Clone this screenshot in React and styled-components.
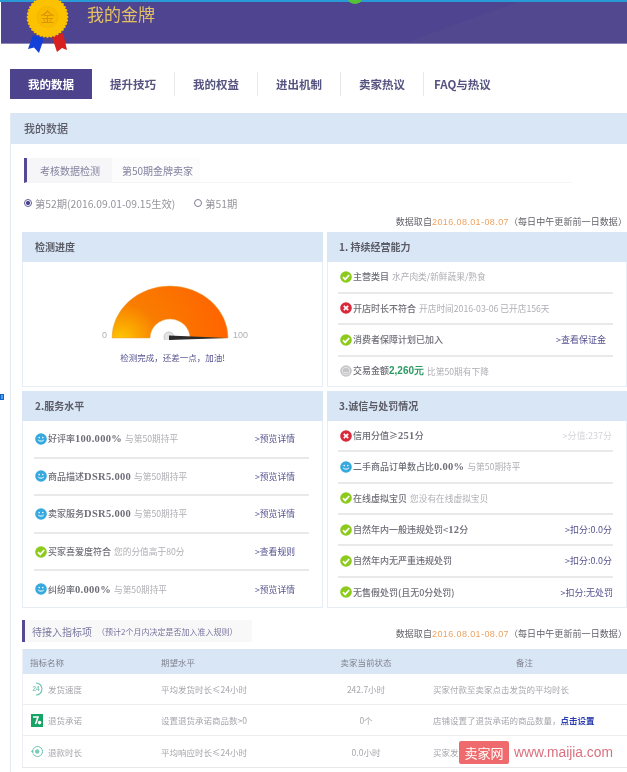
import styled, { createGlobalStyle } from "styled-components";

const GlobalStyle = createGlobalStyle`
  html, body {
    margin: 0;
    background: #fff;
    overflow: hidden;
  }
  body {
    font-family: "Noto Sans CJK SC", "Liberation Sans", sans-serif;
    font-size: 9px;
    color: #77767f;
  }
`;

const Page = styled.div`
  position: relative;
  width: 627px;
  height: 772px;
  overflow: hidden;
  filter: blur(0.45px);
`;

const TopLine = styled.div`
  height: 2px;
  background: #2a9ad6;
`;

const Banner = styled.header`
  height: 42px;
  margin-left: 1px;
  padding-left: 86px;
  display: flex;
  align-items: flex-start;
  background: linear-gradient(160deg, #4f4490 0 70%, #52488f 70% 100%);
  border-bottom: 1px solid #8d86bb;
  box-sizing: border-box;
`;

const BannerTitle = styled.h1`
  margin: 0;
  font-size: 17px;
  line-height: 24px;
  font-weight: 400;
  color: #e3c064;
`;

const Medal = styled.svg`
  position: absolute;
  left: 24px;
  top: 0;
`;

const GreenDot = styled.div`
  position: absolute;
  left: 348px;
  top: -6px;
  width: 14px;
  height: 10px;
  border-radius: 50%;
  background: #55c23a;
`;

const SideMark = styled.div`
  position: absolute;
  left: 0;
  top: 394px;
  width: 2px;
  height: 4px;
  border: 1px solid #1565c8;
  background: #4aa0f0;
`;

const Tabs = styled.nav`
  display: flex;
  margin: 25px 0 14px 10px;
  height: 30px;
`;

const Tab = styled.div`
  width: ${(p) => (p.$active ? "82px" : "83px")};
  display: flex;
  align-items: center;
  justify-content: center;
  box-sizing: border-box;
  font-size: 11.5px;
  font-weight: 700;
  background: ${(p) => (p.$active ? "#4c438c" : "transparent")};
  color: ${(p) => (p.$active ? "#fff" : "#55537f")};
  border-right: ${(p) => (p.$sep ? "1px solid #e8e8ec" : "0")};
  margin: ${(p) => (p.$active ? "0" : "3px 0")};
`;

const LastTab = styled(Tab)`
  justify-content: flex-start;
  padding-left: 10px;
  width: 90px;
`;

const Section = styled.section`
  margin-left: 10px;
  border-left: 1px solid #e3e9f0;
  height: 700px;
`;

const SectionHead = styled.h2`
  margin: 0;
  height: 31px;
  padding: 0 0 2px 13px;
  box-sizing: border-box;
  display: flex;
  align-items: center;
  background: #d8e6f6;
  font-size: 11px;
  font-weight: 500;
  color: #5a5a66;
`;

const SectionBody = styled.div`
  padding: 14px 0 0 11px;
`;

const SubTabs = styled.div`
  display: flex;
  width: 545px;
  margin-left: 2px;
  height: 24px;
  border-left: 3px solid #544a94;
  border-bottom: 1px solid #f5f5f7;
`;

const SubTab = styled.div`
  display: flex;
  align-items: center;
  padding: 0 ${(p) => (p.$active ? "12px" : "7px")} 0 ${(p) => (p.$active ? "13px" : "10px")};
  font-size: 10px;
  color: #85829f;
  background: ${(p) => (p.$active ? "#f6f6f8" : "#fcfcfd")};
`;

const Periods = styled.div`
  display: flex;
  align-items: center;
  margin: 12px 0 0 2px;
  height: 16px;
  font-size: 10.3px;
  color: #96959e;
`;

const Radio = styled.span`
  width: 8px;
  height: 8px;
  border-radius: 50%;
  margin-right: 3px;
  border: 1px solid ${(p) => (p.$on ? "#5d5a96" : "#7a7a98")};
  box-sizing: border-box;
  background: ${(p) => (p.$on ? "radial-gradient(circle, #4c438c 0 2px, #fff 2.2px)" : "#fff")};
`;

const PeriodGap = styled.span`
  width: 19px;
`;

const DataLine = styled.div`
  display: flex;
  justify-content: flex-end;
  height: 12px;
  line-height: 12px;
  margin-top: 5px;
  font-size: 9px;
  letter-spacing: 0.08px;
  color: #5f5f68;
  white-space: nowrap;
`;

const DateRange = styled.span`
  color: #eda25f;
  font-family: "Liberation Sans", sans-serif;
  letter-spacing: 0.4px;
`;

const PanelGrid = styled.div`
  display: grid;
  grid-template-columns: 301px 300px;
  grid-template-rows: 155px 217px;
  gap: 4px;
  margin-top: 4px;
`;

const Panel = styled.div`
  display: flex;
  flex-direction: column;
  border: 1px solid #e6edf4;
  border-top: 0;
`;

const PanelHead = styled.h3`
  margin: 0 -1px;
  height: 30px;
  flex: none;
  padding: 0 0 2px ${(p) => p.$pad || 13}px;
  box-sizing: border-box;
  display: flex;
  align-items: center;
  background: #d8e6f6;
  font-size: 10px;
  font-weight: 700;
  color: #5c5c66;
`;

const Rows = styled.div`
  flex: 1;
  display: flex;
  flex-direction: column;
  margin: 0 ${(p) => p.$right}px 0 ${(p) => p.$left}px;
`;

const Row = styled.div`
  flex: 1;
  display: flex;
  align-items: center;
  min-height: 0;
  border-bottom: 2px solid #e9e9ec;
  white-space: nowrap;
  &:last-child {
    border-bottom: 0;
  }
`;

const RowIcon = styled.svg`
  flex: none;
  margin: 0 1px 0 ${(p) => p.$inset}px;
`;

const Main = styled.span`
  color: #6e6e78;
  font-size: 9px;
  font-weight: 500;
`;

const Strong = styled.b`
  font-family: "Liberation Serif", serif;
  font-size: 10.5px;
  letter-spacing: 0.3px;
`;

const Amount = styled.b`
  font-family: "Liberation Sans", sans-serif;
  font-size: 10px;
  color: #2b9a62;
`;

const Note = styled.span`
  margin-left: 3px;
  color: #aeaeb4;
  font-size: 8.7px;
`;

const Action = styled.span`
  margin-left: auto;
  margin-right: ${(p) => p.$mr}px;
  font-size: ${(p) => (p.$small ? "8.8px" : "9px")};
  color: ${(p) => (p.$muted ? "#d4d4d8" : "#55528f")};
`;

const GaugeBody = styled.div`
  flex: 1;
  display: flex;
  flex-direction: column;
  align-items: center;
  padding-top: 23px;
`;

const GaugeRow = styled.div`
  display: flex;
  align-items: flex-end;
  height: 55px;
  margin-left: -5px;
  font-family: "Liberation Sans", sans-serif;
  font-size: 9px;
  color: #b0b0b4;
  line-height: 10px;
`;

const GaugeLabel = styled.span`
  width: 20px;
  text-align: ${(p) => p.$align};
  padding: 0 ${(p) => (p.$align === "right" ? "4px" : "0")} 0 ${(p) => (p.$align === "left" ? "4px" : "0")};
  box-sizing: border-box;
`;

const GaugeText = styled.div`
  margin-top: 11px;
  font-size: 8.5px;
  color: #55528f;
`;

const PendingBar = styled.div`
  display: flex;
  align-items: center;
  margin-top: 12px;
  height: 22px;
`;

const PendingTitle = styled.div`
  display: flex;
  align-items: center;
  height: 22px;
  width: 230px;
  padding-left: 7px;
  border-left: 3px solid #544a94;
  box-sizing: border-box;
  background: #f8f8f9;
  font-size: 10px;
  color: #7a78a0;
`;

const PendingHint = styled.span`
  margin-left: 5px;
  font-size: 8px;
  color: #77749c;
`;

const PendingData = styled(DataLine)`
  margin: 6px 0 0 auto;
`;

const Table = styled.div`
  margin-top: 7px;
  width: 605px;
  border-bottom: 1px solid #e8e8ec;
`;

const TableRow = styled.div`
  display: grid;
  grid-template-columns: 138px 150px 110px 207px;
  align-items: center;
  height: ${(p) => (p.$head ? "25px" : "31px")};
  background: ${(p) => (p.$head ? "#d8e6f6" : "#fff")};
  border-left: 1px solid #ecf0f5;
  border-bottom: ${(p) => (p.$head ? "0" : "1px solid #eeeef1")};
  box-sizing: border-box;
  color: ${(p) => (p.$head ? "#83838f" : "#a6a6ac")};
  font-size: 8.5px;
  white-space: nowrap;
  &:last-child {
    border-bottom: 0;
  }
`;

const NameCell = styled.div`
  display: flex;
  align-items: center;
  padding-left: ${(p) => (p.$head ? 7 : 8)}px;
`;

const MetricIcon = styled.svg`
  flex: none;
  margin-right: 5px;
`;

const Cell = styled.div`
  text-align: ${(p) => (p.$center ? "center" : "left")};
  padding-left: ${(p) => (p.$pad ? "12px" : "0")};
`;

const SetLink = styled.b`
  color: #2a3db0;
`;

const Watermark = styled.div`
  position: absolute;
  left: 459px;
  top: 741px;
  display: flex;
  align-items: center;
`;

const WatermarkBadge = styled.div`
  width: 50px;
  height: 23px;
  display: flex;
  align-items: center;
  justify-content: center;
  border-radius: 2px;
  background: #ee6a6c;
  color: #fff;
  font-size: 13px;
`;

const WatermarkUrl = styled.span`
  margin-left: 5px;
  font-family: "Liberation Sans", sans-serif;
  font-size: 13.8px;
  color: #d9707f;
`;

function StatusIcon({ type, inset = 0 }) {
  const fill = { ok: "#8ccb1c", bad: "#d8283a", smile: "#36a9de", neutral: "#c6c6c8" }[type];
  return (
    <RowIcon $inset={inset} width="12" height="12" viewBox="0 0 12 12">
      <circle cx="6" cy="6" r="5.8" fill={fill} />
      {type === "ok" && (
        <path d="M3 6.2l2.2 2.2L9.2 4" fill="none" stroke="#fff" strokeWidth="1.7" />
      )}
      {type === "bad" && (
        <path d="M3.8 3.8l4.4 4.4M8.2 3.8L3.8 8.2" fill="none" stroke="#fff" strokeWidth="1.7" />
      )}
      {type === "smile" && (
        <>
          <circle cx="4.2" cy="4.6" r="0.8" fill="#fff" />
          <circle cx="7.8" cy="4.6" r="0.8" fill="#fff" />
          <path d="M3.2 7c.8 1.5 4.8 1.5 5.6 0" fill="none" stroke="#fff" strokeWidth="1" />
        </>
      )}
      {type === "neutral" && (
        <>
          <circle cx="6" cy="6" r="3.8" fill="none" stroke="#ededee" strokeWidth="0.8" />
          <path d="M4 7.5h4" stroke="#ededee" strokeWidth="0.8" />
        </>
      )}
    </RowIcon>
  );
}

function MedalArt() {
  const scallops = Array.from({ length: 36 }, (_, i) => {
    const a = (i / 36) * Math.PI * 2;
    return <circle key={i} cx={23.5 + Math.cos(a) * 19.6} cy={17 + Math.sin(a) * 19.6} r="1.3" fill="#fcc200" />;
  });
  return (
    <Medal width="46" height="56" viewBox="0 0 46 56">
      <polygon points="9,35 4,49 10,47.5 15,53 20,38" fill="#1240d8" />
      <polygon points="28,37 33,52 38,48 43,50 39,33" fill="#d81f1f" />
      {scallops}
      <circle cx="23.5" cy="17" r="19.8" fill="#fcc200" />
      <circle cx="23.5" cy="17" r="10.5" fill="#f9bb00" stroke="#f0ae00" strokeWidth="0.6" />
      <text x="23.5" y="22" textAnchor="middle" fontSize="14" fill="#dd9300" fontFamily="Noto Sans CJK SC">
        金
      </text>
    </Medal>
  );
}

function Gauge() {
  return (
    <svg width="118" height="55" viewBox="0 0 118 55">
      <defs>
        <radialGradient id="gaugeFill" gradientUnits="userSpaceOnUse" cx="10" cy="56" r="105">
          <stop offset="0" stopColor="#ffcc00" />
          <stop offset="0.16" stopColor="#fba600" />
          <stop offset="0.36" stopColor="#f97d00" />
          <stop offset="1" stopColor="#ff6400" />
        </radialGradient>
      </defs>
      <path d="M1 53A58 52 0 0 1 117 53H79A20 19 0 0 0 39 53Z" fill="url(#gaugeFill)" stroke="#e8a040" strokeWidth="0.5" />
      <circle cx="58" cy="52" r="5" fill="#e4e4e4" stroke="#c8c8c8" />
      <path d="M58 50.6L117 53L58 55Z" fill="#2b2b2b" />
    </svg>
  );
}

function PendingIcon({ kind }) {
  if (kind === "seven") {
    return (
      <MetricIcon width="12" height="13" viewBox="0 0 12 13">
        <rect width="12" height="13" fill="#17a567" />
        <path d="M2 3h5L4.5 10" fill="none" stroke="#fff" strokeWidth="1.6" />
        <circle cx="8.6" cy="8.6" r="1.8" fill="#fff" />
      </MetricIcon>
    );
  }
  if (kind === "refund") {
    return (
      <MetricIcon width="12" height="13" viewBox="0 0 12 13">
        <path d="M2 4.4A5 5 0 1 1 2 8.6" fill="none" stroke="#69c5ae" strokeWidth="1" />
        <path d="M0 6.5l2.4-2.4v4.4z" fill="#69c5ae" />
        <circle cx="6.2" cy="6.5" r="2.2" fill="#7ccab8" />
      </MetricIcon>
    );
  }
  return (
    <MetricIcon width="12" height="14" viewBox="0 0 12 14">
      <path d="M5 1a6 6 0 0 1 0 12" fill="none" stroke="#69c5ae" strokeWidth="1.1" />
      <text x="5" y="9.4" textAnchor="middle" fontSize="6.5" fontWeight="700" fill="#8ac8bc" fontFamily="Liberation Sans">
        24
      </text>
    </MetricIcon>
  );
}

const ability = [
  { icon: "ok", main: "主营类目", note: "水产肉类/新鲜蔬果/熟食" },
  { icon: "bad", main: "开店时长不符合", note: "开店时间2016-03-06 已开店156天" },
  { icon: "ok", main: "消费者保障计划已加入", action: ">查看保证金", mr: 7 },
  { icon: "neutral", main: "交易金额", amount: "2,260元", note: "比第50期有下降" },
];

const service = [
  { icon: "smile", main: "好评率", strong: "100.000%", note: "与第50期持平", action: ">预览详情" },
  { icon: "smile", main: "商品描述", strong: "DSR5.000", note: "与第50期持平", action: ">预览详情" },
  { icon: "smile", main: "卖家服务", strong: "DSR5.000", note: "与第50期持平", action: ">预览详情" },
  { icon: "ok", main: "买家喜爱度符合", note: "您的分值高于80分", action: ">查看规则" },
  { icon: "smile", main: "纠纷率", strong: "0.000%", note: "与第50期持平", action: ">预览详情" },
];

const integrity = [
  { icon: "bad", main: "信用分值≥", strong: "251", tail: "分", action: ">分值:237分", muted: true },
  { icon: "smile", main: "二手商品订单数占比", strong: "0.00%", note: "与第50期持平" },
  { icon: "ok", main: "在线虚拟宝贝", note: "您没有在线虚拟宝贝" },
  { icon: "ok", main: "自然年内一般违规处罚<", strong: "12", tail: "分", action: ">扣分:0.0分" },
  { icon: "ok", main: "自然年内无严重违规处罚", action: ">扣分:0.0分" },
  { icon: "ok", main: "无售假处罚(且无0分处罚)", action: ">扣分:无处罚", mr: 0 },
];

const pending = [
  { kind: "clock", name: "发货速度", goal: "平均发货时长≤24小时", state: "242.7小时", note: "买家付款至卖家点击发货的平均时长" },
  { kind: "seven", name: "退货承诺", goal: "设置退货承诺商品数>0", state: "0个", note: "店铺设置了退货承诺的商品数量，", link: "点击设置" },
  { kind: "refund", name: "退款时长", goal: "平均响应时长≤24小时", state: "0.0小时", note: "买家发" },
];

function MetricRows({ items, left, right, actionMr, inset, small }) {
  return (
    <Rows $left={left} $right={right}>
      {items.map((item) => (
        <Row key={item.main}>
          <StatusIcon type={item.icon} inset={inset} />
          <Main>
            {item.main}
            {item.strong && <Strong>{item.strong}</Strong>}
            {item.tail}
            {item.amount && <Amount>{item.amount}</Amount>}
          </Main>
          {item.note && <Note>{item.note}</Note>}
          {item.action && (
            <Action $small={small} $mr={item.mr ?? actionMr} $muted={item.muted}>
              {item.action}
            </Action>
          )}
        </Row>
      ))}
    </Rows>
  );
}

function DataSource() {
  return (
    <>
      数据取自<DateRange>2016.08.01-08.07</DateRange>（每日中午更新前一日数据）
    </>
  );
}

export default function App() {
  return (
    <Page>
      <GlobalStyle />
      <TopLine />
      <Banner>
        <BannerTitle>我的金牌</BannerTitle>
      </Banner>
      <MedalArt />
      <GreenDot />
      <SideMark />

      <Tabs>
        <Tab $active>我的数据</Tab>
        <Tab $sep>提升技巧</Tab>
        <Tab $sep>我的权益</Tab>
        <Tab $sep>进出机制</Tab>
        <Tab $sep>卖家热议</Tab>
        <LastTab>FAQ与热议</LastTab>
      </Tabs>

      <Section>
        <SectionHead>我的数据</SectionHead>
        <SectionBody>
          <SubTabs>
            <SubTab $active>考核数据检测</SubTab>
            <SubTab>第50期金牌卖家</SubTab>
          </SubTabs>

          <Periods>
            <Radio $on />
            第52期(2016.09.01-09.15生效)
            <PeriodGap />
            <Radio />
            第51期
          </Periods>

          <DataLine>
            <DataSource />
          </DataLine>

          <PanelGrid>
            <Panel>
              <PanelHead>检测进度</PanelHead>
              <GaugeBody>
                <GaugeRow>
                  <GaugeLabel $align="right">0</GaugeLabel>
                  <Gauge />
                  <GaugeLabel $align="left">100</GaugeLabel>
                </GaugeRow>
                <GaugeText>检测完成，还差一点，加油!</GaugeText>
              </GaugeBody>
            </Panel>
            <Panel>
              <PanelHead $pad={12}>1. 持续经营能力</PanelHead>
              <MetricRows items={ability} left={10} right={13} actionMr={2} inset={2} />
            </Panel>
            <Panel>
              <PanelHead>2.服务水平</PanelHead>
              <MetricRows items={service} left={11} right={13} actionMr={14} inset={1} small />
            </Panel>
            <Panel>
              <PanelHead $pad={12}>3.诚信与处罚情况</PanelHead>
              <MetricRows items={integrity} left={10} right={13} actionMr={1} inset={2} />
            </Panel>
          </PanelGrid>

          <PendingBar>
            <PendingTitle>
              待接入指标项
              <PendingHint>（预计2个月内决定是否加入准入规则）</PendingHint>
            </PendingTitle>
            <PendingData>
              <DataSource />
            </PendingData>
          </PendingBar>

          <Table>
            <TableRow $head>
              <NameCell $head>指标名称</NameCell>
              <Cell>期望水平</Cell>
              <Cell $center>卖家当前状态</Cell>
              <Cell $center>备注</Cell>
            </TableRow>
            {pending.map((row) => (
              <TableRow key={row.name}>
                <NameCell>
                  <PendingIcon kind={row.kind} />
                  {row.name}
                </NameCell>
                <Cell>{row.goal}</Cell>
                <Cell $center>{row.state}</Cell>
                <Cell $pad>
                  {row.note}
                  {row.link && <SetLink>{row.link}</SetLink>}
                </Cell>
              </TableRow>
            ))}
          </Table>
        </SectionBody>
      </Section>

      <Watermark>
        <WatermarkBadge>卖家网</WatermarkBadge>
        <WatermarkUrl>www.maijia.com</WatermarkUrl>
      </Watermark>
    </Page>
  );
}
